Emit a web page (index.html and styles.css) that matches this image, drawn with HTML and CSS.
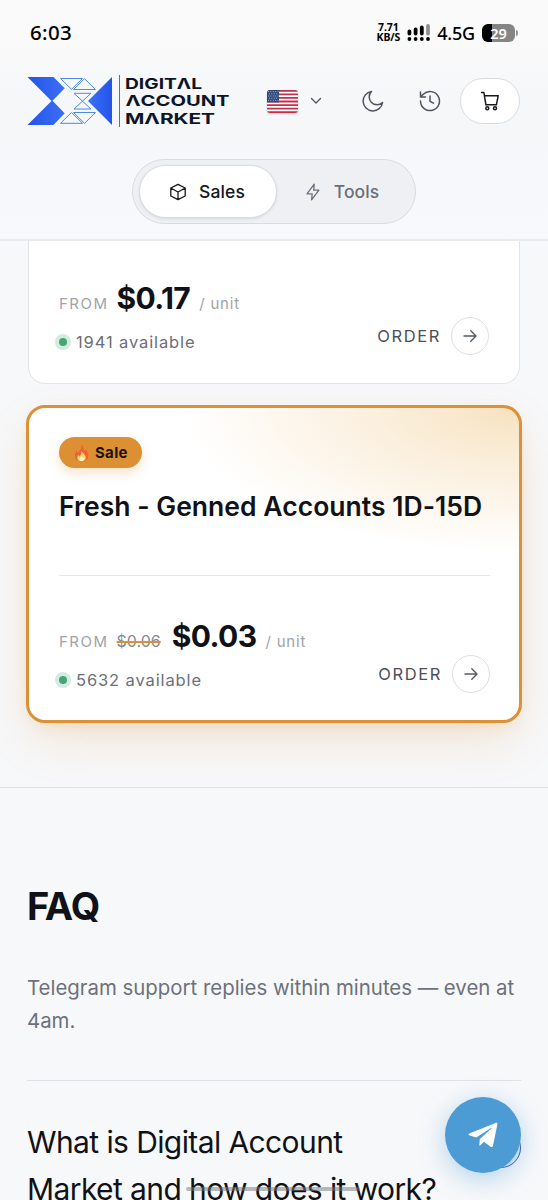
FILE: index.html
```html
<!DOCTYPE html>
<html lang="en">
<head>
<meta charset="utf-8">
<title>Digital Account Market</title>
<link rel="stylesheet" href="styles.css">
</head>
<body>
<header class="header">
  <div class="status">
    <span class="clock">6:03</span>
    <div class="status-right">
      <span class="speed"><span>7.71</span><span>KB/S</span></span>
      <svg class="signal" width="24" height="17" viewBox="0 0 24 17" fill="none" stroke-width="3.8" stroke-linecap="round">
        <path stroke="#000" d="M2.4 7.5v2M8.6 5.5v4M14.8 3.500v6M2.400 15v.01M8.600 15v.01M14.800 15v.01M21 15v.01"/>
        <path stroke="#8f8f8f" d="M21 2v7.500"/>
      </svg>
      <span class="network">4.5G</span>
      <span class="battery"><span class="battery-body">29</span><span class="battery-tip"></span></span>
    </div>
  </div>
  <div class="nav">
    <svg class="logo" width="204" height="54" viewBox="0 0 204 54">
      <defs>
        <linearGradient id="blue" x1="0" x2="1"><stop offset="0" stop-color="#2454e8"/><stop offset="1" stop-color="#3a70f8"/></linearGradient>
        <linearGradient id="blue2" x1="0" x2="1"><stop offset="0" stop-color="#3a70f8"/><stop offset="1" stop-color="#2454e8"/></linearGradient>
      </defs>
      <path fill="url(#blue)" d="M.5 3h26L37.700 14.300 25.500 26.700 37.700 39.300 26.500 51H.5L24.500 27Z"/>
      <path fill="url(#blue2)" d="M85 3v48L61 27Z"/>
      <g fill="none" stroke="#4d8ae6" stroke-width="1">
        <path d="M33.500 4.500H55.500L44.500 15.300ZM46.500 15.500 57.500 4.700 68.500 15.500ZM47 19.300H64L47 35H64ZM33.500 49.300 44.500 38.500 55.500 49.300ZM46.500 38.500H68.500L57.500 49.300Z"/>
      </g>
      <path stroke="#667085" stroke-width="1" d="M92.500 1v52"/>
      <g class="logo-text">
        <text x="98" y="14.700" textLength="77" lengthAdjust="spacingAndGlyphs">DIGITΛL</text>
        <text x="98.500" y="32.200" textLength="104" lengthAdjust="spacingAndGlyphs">ΛCCOUNT</text>
        <text x="98" y="49.700" textLength="90" lengthAdjust="spacingAndGlyphs">MΛRKET</text>
      </g>
    </svg>
    <svg class="flag" width="31" height="23" viewBox="0 0 31 23">
      <rect width="31" height="23" fill="#fff"/>
      <path stroke="#c22f49" stroke-width="1.77" d="M0 .9h31M0 4.440h31M0 7.980h31M0 11.500h31M0 15.040h31M0 18.580h31M0 22.120h31"/>
      <rect width="12" height="12.400" fill="#30487c"/>
      <path stroke="#c3cddd" stroke-width=".9" stroke-dasharray=".9 1.500" d="M1 1.600h10.500M2 3.800h9M1 6h10.500M2 8.200h9M1 10.400h10.500"/>
    </svg>
    <svg class="chevron" width="12" height="8" viewBox="0 0 12 8" fill="none" stroke="#50555f" stroke-width="1.300" stroke-linecap="round" stroke-linejoin="round"><path d="m1.500 1.500 4.500 4.500 4.500-4.500"/></svg>
    <svg class="moon" width="24" height="24" viewBox="0 0 24 24" fill="none" stroke="#50545e" stroke-width="1.500" stroke-linecap="round" stroke-linejoin="round"><path d="M10.500 2.400A7.600 7.600 0 0 0 21.600 13.500 9.800 9.800 0 1 1 10.500 2.400Z"/></svg>
    <svg class="history" width="24" height="24" viewBox="0 0 24 24" fill="none" stroke="#50545e" stroke-width="1.500" stroke-linecap="round" stroke-linejoin="round"><path d="M2.500 12A9.500 9.500 0 1 0 5.300 5.300L2.500 8M2.500 3v5h5M12 7v5.300l3.500 1.900"/></svg>
    <span class="cart">
      <svg width="20" height="20" viewBox="0 0 20 20" fill="none" stroke="#181a20" stroke-width="1.500" stroke-linecap="round" stroke-linejoin="round"><path d="M1.500 1.500h2.400l2 12.300h10.500L18.200 4.700H4.500"/><circle cx="7.300" cy="17.200" r="1.500"/><circle cx="15" cy="17.200" r="1.500"/></svg>
    </span>
  </div>
  <div class="tabs">
    <span class="tab tab-active">
      <svg width="18" height="18" viewBox="0 0 18 18" fill="none" stroke="#15171c" stroke-width="1.300" stroke-linejoin="round"><path d="M9 1.300 16.200 5v8L9 16.700 1.800 13V5ZM1.800 5 9 9l7.200-4M9 9v7.700"/></svg>
      Sales
    </span>
    <span class="tab tab-tools">
      <svg width="18" height="18" viewBox="0 0 18 18" fill="none" stroke="#6b6f7a" stroke-width="1.300" stroke-linejoin="round"><path d="M10.200 1.200 3 10.800h5.200L7.600 16.800 14.900 7.200H9.700Z"/></svg>
      Tools
    </span>
  </div>
</header>

<main>
  <section class="products">
    <article class="card card-plain">
      <div class="card-footer">
        <div class="offer">
          <div class="price-row"><span class="from">FROM</span><span class="price">$0.17</span><span class="unit">/ unit</span></div>
          <div class="stock"><i class="dot"></i>1941 available</div>
        </div>
        <div class="order">ORDER<span class="arrow"><svg width="16" height="14" viewBox="0 0 16 14" fill="none" stroke="#555a66" stroke-width="1.400" stroke-linecap="round" stroke-linejoin="round"><path d="M2 7h12M8.800 1.800 14 7l-5.200 5.200"/></svg></span></div>
      </div>
    </article>
    <article class="card card-sale">
      <span class="badge">
        <svg width="15" height="18" viewBox="0 0 15 18"><path fill="#ee6236" d="M7 .5C11 3.500 8.800 6 10.800 7c.8-.6.7-1.500.5-2.300 2.400 2.300 3.400 4.900 3 7.800-.5 3.200-3 5-6.800 5S1 15.500.9 12.300C.8 9.800 2 8.500 2 6.500c1.200.6 1.600 1.500 1.700 2.600C6 6.500 8 4.500 7 .5Z"/><path fill="#ffd867" d="M7.600 6.500c.3 2.500 4.500 4.500 4.200 7.600-.2 2-1.800 3.200-4.200 3.200s-4.300-1.300-4.300-3.300c0-1.300.6-2.200 1.200-2.900.2.800.5 1.200 1.200 1.400C6.500 10.500 7.800 9.500 7.600 6.500Z"/><path fill="#fff3c4" d="M7.600 11.500c.2 1.300 2.200 2 2.100 3.700 0 1.200-.9 1.900-2.200 1.900s-2.200-.8-2.200-1.900c0-1.600 2-2.200 2.300-3.700Z"/></svg>
        Sale
      </span>
      <h2 class="title">Fresh - Genned Accounts 1D-15D</h2>
      <div class="divider"></div>
      <div class="card-footer">
        <div class="offer">
          <div class="price-row"><span class="from">FROM</span><s class="old">$0.06</s><span class="price">$0.03</span><span class="unit">/ unit</span></div>
          <div class="stock"><i class="dot"></i>5632 available</div>
        </div>
        <div class="order">ORDER<span class="arrow"><svg width="16" height="14" viewBox="0 0 16 14" fill="none" stroke="#555a66" stroke-width="1.400" stroke-linecap="round" stroke-linejoin="round"><path d="M2 7h12M8.800 1.800 14 7l-5.200 5.200"/></svg></span></div>
      </div>
    </article>
  </section>
  <section class="faq">
    <h1 class="faq-title">FAQ</h1>
    <p class="faq-sub">Telegram support replies within minutes — even at 4am.</p>
    <div class="question">
      <h3>What is Digital Account<br>Market and how does it work?</h3>
      <span class="toggle"></span>
    </div>
  </section>
</main>
<div class="telegram">
  <svg width="30" height="26" viewBox="0 0 30 26" fill="#fff"><path d="M1.300 11.500 27.600.9c1.200-.4 2 .2 1.700 1.800L25 23.500c-.3 1.500-1.200 1.800-2.400 1.200l-6.700-4.900-3.300 3.200c-.4.400-.7.600-1.300.6l.5-6.500L23.500 6.600c.5-.5-.1-.7-.7-.3L8.200 15.500 1.700 13.500c-1.400-.4-1.400-1.300-.4-2Z"/></svg>
</div>
<div class="home-bar"></div>
</body>
</html>
```
FILE: styles.css
```css
* { box-sizing: border-box; }
body {
  margin: 0;
  height: 1200px;
  overflow: hidden;
  position: relative;
  background: #f7f8fa;
  font-family: Inter, "Liberation Sans", sans-serif;
  color: #101217;
}
svg { display: block; flex: none; }
h1, h2, h3, p { margin: 0; }

.header {
  height: 241px;
  background: linear-gradient(#fafafa 0, #f9f9fa 50px, #f5f7f9 105px, #f7f8fb 200px, #f8f9fc);
  border-bottom: 2px solid #e9eaed;
}
.status {
  height: 66px;
  padding: 0 30px;
  display: flex;
  justify-content: space-between;
  align-items: center;
  font-family: "Noto Sans", sans-serif;
  color: #000;
}
.clock { font-size: 20.500px; line-height: 24px; font-weight: 500; letter-spacing: .3px; margin-top: -2px; }
.status-right { display: flex; align-items: center; margin-top: -1px; }
.speed {
  display: flex;
  flex-direction: column;
  align-items: center;
  font-size: 10.500px;
  line-height: 9.500px;
  font-weight: 700;
  letter-spacing: -.1px;
}
.signal { margin-left: 7px; }
.network { margin-left: 6px; font-size: 18px; font-weight: 500; letter-spacing: -.2px; }
.battery { display: flex; align-items: center; margin-left: 7px; gap: 1px; }
.battery-body {
  width: 33px;
  height: 18px;
  border-radius: 6px;
  background: linear-gradient(90deg, #000 10px, #858585 10px);
  color: #fff;
  font-size: 14.500px;
  line-height: 18px;
  font-weight: 600;
  text-align: center;
}
.battery-tip { width: 2px; height: 6px; border-radius: 0 2px 2px 0; background: #999; }

.nav { height: 70px; padding: 0 28px 0 27px; display: flex; align-items: center; }
.flag { margin-left: 36px; border-radius: 3px; box-shadow: 0 1px 2px #0003; }
.chevron { margin-left: 12px; }
.moon { margin-left: 38.500px; }
.history { margin-left: 33px; }
.logo-text { font-weight: 700; font-size: 14.500px; fill: #0d1527; }
.cart {
  margin-left: auto;
  width: 60px;
  height: 46px;
  border: 1px solid #d9dbdf;
  border-radius: 23px;
  background: #fff;
  display: flex;
  align-items: center;
  justify-content: center;
}

.tabs {
  width: 284px;
  height: 65px;
  margin: 23px auto 0;
  padding: 5px 6px;
  border: 1px solid #d9dbe0;
  border-radius: 33px;
  background: #eff0f4;
  display: flex;
}
.tab {
  flex: 0 0 134px;
  height: 53px;
  display: flex;
  align-items: center;
  justify-content: center;
  gap: 12px;
  font-size: 17.500px;
  font-weight: 500;
  color: #6b6f7a;
  letter-spacing: .1px;
}
.tab-tools { padding-right: 5px; }
.tab-active {
  flex-basis: 138px;
  border: 1px solid #dadce1;
  border-radius: 27px;
  background: #fff;
  color: #15171c;
  padding-right: 2px;
  box-shadow: 0 1px 3px #0000001a;
}

.products {
  height: 547px;
  padding: 0 28px;
  border-bottom: 1px solid #dfe1e5;
}
.card { background: #fff; display: flex; flex-direction: column; }
.card-plain {
  height: 143px;
  padding: 0 30px 28px;
  border: 1px solid #e2e4e8;
  border-top: 0;
  border-radius: 0 0 17px 17px;
}
.card-sale {
  height: 318px;
  margin: 21px -2px 0;
  padding: 29px 29px 27px 30px;
  border: 3px solid #dc9136;
  border-radius: 19px;
  background: radial-gradient(ellipse 340px 145px at 100% 0, #f7e2c0 0%, #fbf0df 45%, #fff 100%) #fff;
  box-shadow: 0 20px 50px -8px #dc91363d, 0 5px 18px -8px #dc91364d;
}
.badge {
  width: 83px;
  height: 31px;
  border-radius: 16px;
  background: #dc9033;
  color: #1c1208;
  display: flex;
  align-items: center;
  padding-left: 15px;
  gap: 6px;
  font-size: 15px;
  font-weight: 700;
  letter-spacing: .3px;
  box-shadow: 0 5px 12px #dc913640;
}
.title { margin-top: 20px; font-size: 26.500px; line-height: 36px; font-weight: 600; letter-spacing: .03px; white-space: nowrap; }
.divider { margin-top: 51px; height: 1px; background: #e5e6e9; }
.card-footer { margin-top: auto; height: 75px; display: flex; justify-content: space-between; align-items: flex-end; }
.offer { height: 75px; }
.price-row { height: 36px; display: flex; align-items: baseline; white-space: nowrap; line-height: 36px; color: #a0a3aa; }
.from { font-size: 15px; letter-spacing: 1.500px; margin-right: 8px; }
.old { font-size: 16px; color: #858993; text-decoration: line-through #dc9136 1.500px; margin-right: 11px; }
.price { font-size: 30px; font-weight: 700; color: #101217; letter-spacing: -.6px; }
.unit { font-size: 15px; letter-spacing: .8px; margin-left: 9px; }
.stock { margin-top: 16px; height: 20px; line-height: 20px; font-size: 16.500px; letter-spacing: .88px; color: #6b6f7a; display: flex; align-items: center; }
.dot { width: 8px; height: 8px; border-radius: 50%; background: #48a477; box-shadow: 0 0 0 4px #d3ecdf; margin-right: 9px; }
.order { display: flex; align-items: center; gap: 10px; font-size: 16.500px; letter-spacing: 1.600px; color: #4b4f59; }
.arrow { width: 38px; height: 38px; border: 1px solid #dcdee2; border-radius: 50%; display: flex; align-items: center; justify-content: center; }

.faq { padding: 93px 27px 0; }
.faq-title { font-size: 38px; line-height: 50px; font-weight: 700; letter-spacing: -1px; }
.faq-sub { margin-top: 40px; font-size: 20.400px; line-height: 33px; color: #6d717c; }
.question { margin-top: 43px; padding-top: 38px; border-top: 1px solid #dfe1e5; display: flex; justify-content: space-between; }
.question h3 { font-size: 30px; line-height: 47px; font-weight: 400; letter-spacing: -.6px; white-space: nowrap; }
.toggle { flex: none; width: 40px; height: 40px; margin-top: 9px; border: 1px solid #3555b5; border-radius: 50%; background: #dce9f7; }

.telegram {
  position: absolute;
  left: 445px;
  top: 1097px;
  width: 76px;
  height: 76px;
  border-radius: 50%;
  background: #4c9bd5;
  box-shadow: 0 6px 26px #4c9bd566;
  display: flex;
  align-items: center;
  justify-content: center;
}
.home-bar { position: absolute; left: 186px; top: 1187px; width: 174px; height: 4px; border-radius: 2px; background: #77777780; }
```
